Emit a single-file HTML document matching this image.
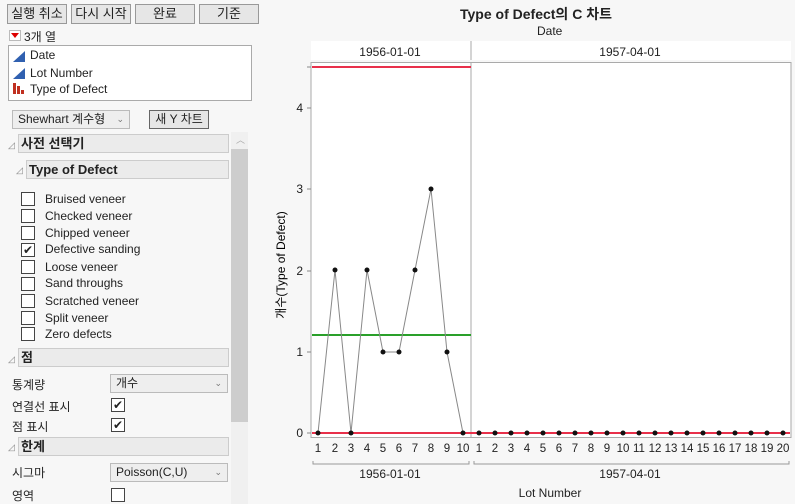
<!DOCTYPE html>
<html><head><meta charset="utf-8"><style>
body{margin:0;width:795px;height:504px;background:#f7f7f7;font-family:"Liberation Sans","Noto Sans CJK KR",sans-serif;font-size:12px;color:#222;position:relative;overflow:hidden}
.a{position:absolute;white-space:nowrap}
.btn{position:absolute;top:4px;height:18px;background:#e6e6e6;border:1px solid #999;font-size:13px;text-align:center;line-height:18px}
.hdr{position:absolute;left:18px;width:207px;height:17px;background:#ebebeb;border:1px solid #ccc;font-weight:bold;font-size:13px;line-height:17px;padding-left:2px}
.tri{position:absolute;font-size:9px;color:#888}
.cb{position:absolute;width:12px;height:12px;border:1px solid #444;background:#fff}
.lbl{position:absolute;font-size:12px}
.sel{position:absolute;height:17px;background:#eee;border:1px solid #bbb;font-size:12px;line-height:17px;padding-left:5px}
</style></head><body>
<div class="btn" style="left:7px;width:58px">실행 취소</div>
<div class="btn" style="left:71px;width:58px">다시 시작</div>
<div class="btn" style="left:135px;width:58px">완료</div>
<div class="btn" style="left:199px;width:58px">기준</div>
<div class="a" style="left:9px;top:30px;width:10px;height:9px;background:#fff;border:1px solid #bbb"><div style="margin:2px auto 0;width:0;height:0;border-left:4px solid transparent;border-right:4px solid transparent;border-top:5px solid #d00"></div></div>
<div class="a" style="left:24px;top:28px;font-size:12px">3개 열</div>
<div class="a" style="left:8px;top:45px;width:242px;height:54px;background:#fff;border:1px solid #aaa"></div>
<svg class="a" style="left:12px;top:49px" width="16" height="50"><polygon points="1,13 13,2 13,13" fill="#3060b0"/><polygon points="1,30 13,19 13,30" fill="#3060b0"/><rect x="1" y="34" width="3" height="11" fill="#c03020"/><rect x="5" y="37" width="3" height="8" fill="#c03020"/><rect x="9" y="41" width="3" height="4" fill="#c03020"/></svg>
<div class="a" style="left:30px;top:48px">Date</div>
<div class="a" style="left:30px;top:66px">Lot Number</div>
<div class="a" style="left:30px;top:82px">Type of Defect</div>
<div class="sel" style="left:12px;top:110px;width:111px">Shewhart 계수형 <span style="float:right;margin-right:5px;color:#777;font-size:9px">⌄</span></div>
<div class="a" style="left:149px;top:110px;width:58px;height:17px;background:#e6e6e6;border:1px solid #666;text-align:center;line-height:17px;font-size:12px">새 Y 차트</div>
<div class="tri" style="left:8px;top:140px">◿</div><div class="hdr" style="top:134px">사전 선택기</div>
<div class="tri" style="left:16px;top:165px">◿</div><div class="hdr" style="top:160px;left:26px;width:199px">Type of Defect</div>
<div class="cb" style="left:21px;top:192px"></div><div class="lbl" style="left:45px;top:192px">Bruised veneer</div>
<div class="cb" style="left:21px;top:209px"></div><div class="lbl" style="left:45px;top:209px">Checked veneer</div>
<div class="cb" style="left:21px;top:226px"></div><div class="lbl" style="left:45px;top:226px">Chipped veneer</div>
<div class="cb" style="left:21px;top:243px;font-size:12px;line-height:12px;text-align:center">✔</div><div class="lbl" style="left:45px;top:242px">Defective sanding</div>
<div class="cb" style="left:21px;top:260px"></div><div class="lbl" style="left:45px;top:260px">Loose veneer</div>
<div class="cb" style="left:21px;top:277px"></div><div class="lbl" style="left:45px;top:276px">Sand throughs</div>
<div class="cb" style="left:21px;top:294px"></div><div class="lbl" style="left:45px;top:294px">Scratched veneer</div>
<div class="cb" style="left:21px;top:311px"></div><div class="lbl" style="left:45px;top:311px">Split veneer</div>
<div class="cb" style="left:21px;top:327px"></div><div class="lbl" style="left:45px;top:327px">Zero defects</div>
<div class="tri" style="left:8px;top:354px">◿</div><div class="hdr" style="top:348px">점</div>
<div class="lbl" style="left:12px;top:376px">통계량</div>
<div class="sel" style="left:110px;top:374px;width:111px">개수<span style="float:right;margin-right:5px;color:#777;font-size:9px">⌄</span></div>
<div class="lbl" style="left:12px;top:398px">연결선 표시</div>
<div class="cb" style="left:111px;top:398px;line-height:12px;text-align:center">✔</div>
<div class="lbl" style="left:12px;top:418px">점 표시</div>
<div class="cb" style="left:111px;top:418px;line-height:12px;text-align:center">✔</div>
<div class="tri" style="left:8px;top:442px">◿</div><div class="hdr" style="top:437px">한계</div>
<div class="lbl" style="left:12px;top:464px">시그마</div>
<div class="sel" style="left:110px;top:463px;width:111px">Poisson(C,U)<span style="float:right;margin-right:5px;color:#777;font-size:9px">⌄</span></div>
<div class="lbl" style="left:12px;top:487px">영역</div>
<div class="cb" style="left:111px;top:488px"></div>
<div class="a" style="left:231px;top:132px;width:17px;height:372px;background:#f0f0f0"></div>
<div class="a" style="left:231px;top:149px;width:17px;height:273px;background:#cdcdcd"></div>
<div class="a" style="left:236px;top:133px;font-size:9px;color:#aaa">︿</div>

<div class="a" style="left:460px;top:4px;font-weight:bold;font-size:14px">Type of Defect의 C 차트</div>
<div class="a" style="left:537px;top:24px">Date</div>
<svg class="a" style="left:270px;top:0" width="525" height="504" font-family="Liberation Sans, sans-serif" font-size="12">
<rect x="41" y="41" width="480" height="19" fill="#fff"/>
<line x1="201" y1="41" x2="201" y2="60" stroke="#aaa"/>
<text x="120" y="56" text-anchor="middle" fill="#222">1956-01-01</text>
<text x="360" y="56" text-anchor="middle" fill="#222">1957-04-01</text>
<rect x="41" y="62.5" width="480" height="375" fill="#fff" stroke="#aaa"/>
<line x1="201" y1="62" x2="201" y2="438" stroke="#aaa"/>
<g stroke="#888"><line x1="37" y1="67" x2="41" y2="67"/><line x1="37" y1="108" x2="41" y2="108"/><line x1="37" y1="189" x2="41" y2="189"/><line x1="37" y1="271" x2="41" y2="271"/><line x1="37" y1="352" x2="41" y2="352"/><line x1="37" y1="433" x2="41" y2="433"/></g>
<g fill="#222" text-anchor="end"><text x="33" y="112">4</text><text x="33" y="193">3</text><text x="33" y="275">2</text><text x="33" y="356">1</text><text x="33" y="437">0</text></g>
<text transform="translate(15,265) rotate(-90)" text-anchor="middle" font-family="Liberation Sans, Noto Sans CJK KR, sans-serif">개수(Type of Defect)</text>
<line x1="42" y1="67" x2="201" y2="67" stroke="#e8304a" stroke-width="2"/>
<line x1="42" y1="335" x2="201" y2="335" stroke="#2aa02a" stroke-width="2"/>
<line x1="42" y1="433" x2="520" y2="433" stroke="#e8304a" stroke-width="2"/>
<polyline fill="none" stroke="#888" points="48,433 65,270 81,433 97,270 113,352 129,352 145,270 161,189 177,352 193,433"/>
<g fill="#111"><circle cx="48" cy="433" r="2.5"/><circle cx="65" cy="270" r="2.5"/><circle cx="81" cy="433" r="2.5"/><circle cx="97" cy="270" r="2.5"/><circle cx="113" cy="352" r="2.5"/><circle cx="129" cy="352" r="2.5"/><circle cx="145" cy="270" r="2.5"/><circle cx="161" cy="189" r="2.5"/><circle cx="177" cy="352" r="2.5"/><circle cx="193" cy="433" r="2.5"/>
<circle cx="209" cy="433" r="2.5"/><circle cx="225" cy="433" r="2.5"/><circle cx="241" cy="433" r="2.5"/><circle cx="257" cy="433" r="2.5"/><circle cx="273" cy="433" r="2.5"/><circle cx="289" cy="433" r="2.5"/><circle cx="305" cy="433" r="2.5"/><circle cx="321" cy="433" r="2.5"/><circle cx="337" cy="433" r="2.5"/><circle cx="353" cy="433" r="2.5"/><circle cx="369" cy="433" r="2.5"/><circle cx="385" cy="433" r="2.5"/><circle cx="401" cy="433" r="2.5"/><circle cx="417" cy="433" r="2.5"/><circle cx="433" cy="433" r="2.5"/><circle cx="449" cy="433" r="2.5"/><circle cx="465" cy="433" r="2.5"/><circle cx="481" cy="433" r="2.5"/><circle cx="497" cy="433" r="2.5"/><circle cx="513" cy="433" r="2.5"/></g>
<g fill="#222" text-anchor="middle" font-size="11.5">
<text x="48" y="452">1</text><text x="65" y="452">2</text><text x="81" y="452">3</text><text x="97" y="452">4</text><text x="113" y="452">5</text><text x="129" y="452">6</text><text x="145" y="452">7</text><text x="161" y="452">8</text><text x="177" y="452">9</text><text x="193" y="452">10</text>
<text x="209" y="452">1</text><text x="225" y="452">2</text><text x="241" y="452">3</text><text x="257" y="452">4</text><text x="273" y="452">5</text><text x="289" y="452">6</text><text x="305" y="452">7</text><text x="321" y="452">8</text><text x="337" y="452">9</text><text x="353" y="452">10</text><text x="369" y="452">11</text><text x="385" y="452">12</text><text x="401" y="452">13</text><text x="417" y="452">14</text><text x="433" y="452">15</text><text x="449" y="452">16</text><text x="465" y="452">17</text><text x="481" y="452">18</text><text x="497" y="452">19</text><text x="513" y="452">20</text></g>
<polyline fill="none" stroke="#999" points="43,461 43,464 199,464 199,461"/>
<polyline fill="none" stroke="#999" points="204,461 204,464 519,464 519,461"/>
<text x="120" y="478" text-anchor="middle" fill="#222">1956-01-01</text>
<text x="360" y="478" text-anchor="middle" fill="#222">1957-04-01</text>
<text x="280" y="497" text-anchor="middle" fill="#222">Lot Number</text>
</svg>
</body></html>
